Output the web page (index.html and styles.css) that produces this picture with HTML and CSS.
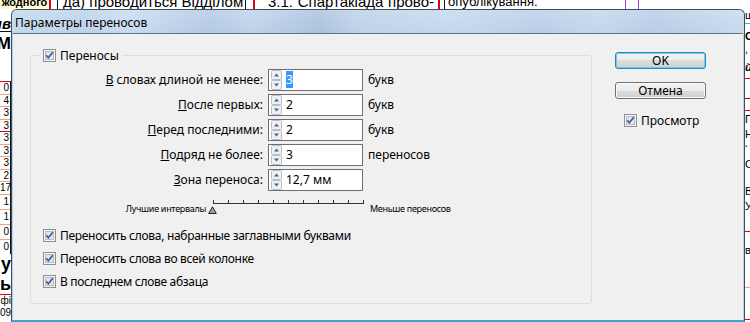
FILE: index.html
```html
<!doctype html>
<html>
<head>
    <title>Параметры переносов</title>
    <meta charset="utf-8">
    <link rel="stylesheet" href="styles.css">
</head>
<body>
    <!-- страница документа под окном -->
    <div class="page">
        <div class="top">
            <span class="yel">жодного</span>
            <span class="vr red"></span>
            <span class="vr blk v57"></span>
            <span class="txt c1">да) проводиться Відділом</span>
            <span class="vr blk v245"></span>
            <span class="vr red v253"></span>
            <span class="txt c2">3.1. Спартакіада прово-</span>
            <span class="vr red v437"></span>
            <span class="vr blk v443"></span>
            <span class="txt c3">опублікування.</span>
            <span class="vr violet v624"></span>
            <span class="vr violet v637"></span>
        </div>
        <div class="mid">
            <div class="lstrip">
                <b class="ls-a">ив</b>
                <span class="hr blk"></span>
                <b class="ls-m">М</b>
                <div class="ls-table">
                    <span class="red">0</span>
                    <span>4</span>
                    <span>3</span>
                    <span>3</span>
                    <span class="red">3</span>
                    <span>3</span>
                    <span>3</span>
                    <span>2</span>
                    <span>17</span>
                    <span class="tall">1</span>
                    <span class="tall">1</span>
                    <span class="tall">0</span>
                    <span class="tall">0</span>
                </div>
                <b class="ls-big">у</b>
                <b class="ls-big">ь</b>
                <span class="hr red"></span>
                <span class="ls-small">фі</span>
                <span class="ls-small">09</span>
            </div>
            <div class="rstrip">
                <span class="rs-sm">ш</span>
                <span class="hr cyan r23"></span>
                <b class="rs-b">С</b>
                <span class="rs-sm">,</span>
                <b class="rs-b"><i>й</i></b>
                <span class="hr red r75"></span>
                <span class="hr dred r95"></span>
                <span class="hr red r107"></span>
                <span class="rs-t">П</span>
                <span class="rs-t">Н</span>
                <span class="rs-t">‘</span>
                <span class="rs-t">О</span>
                <span class="rs-t r185">В</span>
                <span class="rs-t">У</span>
                <span class="hr red r227"></span>
                <span class="rs-t r244">в</span>
                <span class="hr salmon r288"></span>
                <span class="hr red r320"></span>
            </div>
        </div>
    </div>

    <!-- окно диалога -->
    <div class="dialog">
        <div class="titlebar">Параметры переносов</div>
        <div class="client">
            <fieldset class="group">
                <legend>
                    <svg class="cb" viewBox="0 0 13 13"><rect class="o" x=".5" y=".5" width="12" height="12"/><rect class="i" x="2.5" y="2.5" width="8" height="8"/><path d="M3.2 6.3 5.3 8.7 9.8 3.3"/></svg>
                    Переносы
                </legend>

                <div class="fields">
                    <label><u>В</u> словах длиной не менее:</label>
                    <span class="num">
                        <svg class="spin" viewBox="0 0 11 20"><rect x=".5" y=".5" width="10" height="9" rx="1"/><rect x=".5" y="10.5" width="10" height="9" rx="1"/><path d="M3 6.5h5L5.5 3.5z"/><path d="M3 13.5h5l-2.5 3z"/></svg>
                        <span><span class="sel">3</span></span>
                    </span>
                    <span>букв</span>

                    <label><u>П</u>осле первых:</label>
                    <span class="num">
                        <svg class="spin" viewBox="0 0 11 20"><rect x=".5" y=".5" width="10" height="9" rx="1"/><rect x=".5" y="10.5" width="10" height="9" rx="1"/><path d="M3 6.5h5L5.5 3.5z"/><path d="M3 13.5h5l-2.5 3z"/></svg>
                        <span>2</span>
                    </span>
                    <span>букв</span>

                    <label><u>П</u>еред последними:</label>
                    <span class="num">
                        <svg class="spin" viewBox="0 0 11 20"><rect x=".5" y=".5" width="10" height="9" rx="1"/><rect x=".5" y="10.5" width="10" height="9" rx="1"/><path d="M3 6.5h5L5.5 3.5z"/><path d="M3 13.5h5l-2.5 3z"/></svg>
                        <span>2</span>
                    </span>
                    <span>букв</span>

                    <label><u>П</u>одряд не более:</label>
                    <span class="num">
                        <svg class="spin" viewBox="0 0 11 20"><rect x=".5" y=".5" width="10" height="9" rx="1"/><rect x=".5" y="10.5" width="10" height="9" rx="1"/><path d="M3 6.5h5L5.5 3.5z"/><path d="M3 13.5h5l-2.5 3z"/></svg>
                        <span>3</span>
                    </span>
                    <span>переносов</span>

                    <label><u>З</u>она переноса:</label>
                    <span class="num">
                        <svg class="spin" viewBox="0 0 11 20"><rect x=".5" y=".5" width="10" height="9" rx="1"/><rect x=".5" y="10.5" width="10" height="9" rx="1"/><path d="M3 6.5h5L5.5 3.5z"/><path d="M3 13.5h5l-2.5 3z"/></svg>
                        <span>12,7 мм</span>
                    </span>
                    <span></span>
                </div>

                <!-- шкала -->
                <div class="scale">
                    <div class="best">
                        <span>Лучшие интервалы</span>
                        <svg class="thumb" viewBox="0 0 9 8"><path d="M4.5 .8 8.3 7.5H.7z"/></svg>
                    </div>
                    <div class="ruler"></div>
                    <div class="less">Меньше переносов</div>
                </div>

                <div class="checks">
                    <div class="check">
                        <svg class="cb" viewBox="0 0 13 13"><rect class="o" x=".5" y=".5" width="12" height="12"/><rect class="i" x="2.5" y="2.5" width="8" height="8"/><path d="M3.2 6.3 5.3 8.7 9.8 3.3"/></svg>
                        Переносить слова, набранные заглавными буквами
                    </div>
                    <div class="check">
                        <svg class="cb" viewBox="0 0 13 13"><rect class="o" x=".5" y=".5" width="12" height="12"/><rect class="i" x="2.5" y="2.5" width="8" height="8"/><path d="M3.2 6.3 5.3 8.7 9.8 3.3"/></svg>
                        Переносить слова во всей колонке
                    </div>
                    <div class="check">
                        <svg class="cb" viewBox="0 0 13 13"><rect class="o" x=".5" y=".5" width="12" height="12"/><rect class="i" x="2.5" y="2.5" width="8" height="8"/><path d="M3.2 6.3 5.3 8.7 9.8 3.3"/></svg>
                        В последнем слове абзаца
                    </div>
                </div>
            </fieldset>

            <div class="side">
                <button class="btn def">OK</button>
                <button class="btn">Отмена</button>
                <div class="check">
                    <svg class="cb" viewBox="0 0 13 13"><rect class="o" x=".5" y=".5" width="12" height="12"/><rect class="i" x="2.5" y="2.5" width="8" height="8"/><path d="M3.2 6.3 5.3 8.7 9.8 3.3"/></svg>
                    Просмотр
                </div>
            </div>
        </div>
    </div>
</body>
</html>
```

FILE: styles.css
```css
body {
    margin: 0;
    width: 750px;
    height: 322px;
    overflow: hidden;
    position: relative;
    background: #fff;
    font-family: 'Liberation Sans', Arial, sans-serif;
    color: #000;
}

/* ---- страница под окном ---- */
.page {
    display: flex;
    flex-direction: column;
    height: 322px;
}

.top {
    display: flex;
    flex: none;
    height: 9px;
    overflow: hidden;
    line-height: 4px;
    white-space: nowrap;
}

.yel {
    width: 49px;
    background: #fffbd2;
    font-size: 11px;
    font-weight: bold;
    text-align: center;
}

.vr {
    width: 1px;
    flex: none;
}
.vr.red { width: 2px; }

.red { background: #e3001b; }
.blk { background: #111; }
.violet { background: #9b3cf0; }
.cyan { background: #18c6da; }
.dred { background: #a0000f; }
.salmon { background: #f3a07e; }

.v57 { margin-left: 6px; }
.v245 { margin-left: 5px; }
.v253 { margin-left: 7px; }
.v437 { margin-left: 4px; }
.v443 { margin-left: 4px; }
.v624 { margin-left: 89px; }
.v637 { margin-left: 12px; }

.txt {
    font-size: 15px;
    text-align-last: justify;
    flex: none;
}
.c1 { width: 177px; margin-left: 5px; }
.c2 { width: 166px; margin-left: 13px; }
.c3 { width: 88px; margin-left: 3px; font-size: 13px; text-align-last: auto; }

.mid {
    display: flex;
    flex: 1;
    justify-content: space-between;
}

.hr {
    align-self: stretch;
    height: 1px;
    flex: none;
}

.lstrip {
    width: 11px;
    overflow: hidden;
    display: flex;
    flex-direction: column;
    align-items: flex-end;
    white-space: nowrap;
}

.ls-a {
    margin-top: 7px;
    font-size: 15px;
    font-style: italic;
    line-height: 15px;
}

.ls-m {
    margin-top: 3px;
    font-size: 17px;
    line-height: 18px;
}

.ls-table {
    align-self: stretch;
    margin-top: 28px;
    border-right: 1px solid #111;
    display: flex;
    flex-direction: column;
}

.ls-table span {
    height: 12.5px;
    box-sizing: border-box;
    border-top: 1px solid #f3a07e;
    font-size: 10px;
    line-height: 11px;
    text-align: right;
    padding-right: 1px;
    background: none;
}
.ls-table span.red { border-top-color: #e3001b; }
.ls-table span.tall { height: 15px; line-height: 14px; }

.ls-big {
    font-size: 18px;
    line-height: 20px;
}

.ls-small {
    font-size: 10px;
    line-height: 12px;
}

.rstrip {
    width: 5px;
    overflow: hidden;
    display: flex;
    flex-direction: column;
    align-items: flex-start;
    white-space: nowrap;
    font-size: 11px;
}

.rs-sm { line-height: 12px; }
.r23 { margin-top: 2px; }
.rs-b { line-height: 13px; margin-top: 6px; }
.r75 { margin-top: 4px; }
.r95 { margin-top: 19px; }
.r107 { margin-top: 11px; }
.rs-t { line-height: 13px; margin-top: 2px; }
.r185 { margin-top: 14px; }
.r227 { margin-top: 18px; }
.r244 { margin-top: 12px; }
.r288 { margin-top: 30px; }
.r320 { margin-top: 31px; }

/* ---- окно ---- */
.dialog {
    position: absolute;
    left: 11px;
    top: 9px;
    width: 732px;
    border: 1px solid #3f4d5c;
    border-bottom: 2px solid #3aa5cf;
    border-radius: 6px 6px 0 0;
    background: #b9cfe7;
    font-family: 'Noto Sans', 'Segoe UI', sans-serif;
    font-size: 12px;
    color: #000;
}

.titlebar {
    height: 23px;
    box-sizing: border-box;
    padding: 5px 0 0 3px;
    line-height: 16px;
    border-radius: 5px 5px 0 0;
    background:
        linear-gradient(rgba(255, 255, 255, 0.18), rgba(255, 255, 255, 0)),
        linear-gradient(90deg, #c3d7ec 0%, #bcd2ea 10%, #c8dbef 16%, #b2c9e3 27%, #bed3ea 33%, #a9c2de 42%, #bcd1e8 47%, #c4d8ed 60%, #b8cee7 72%, #c2d6ec 80%, #b6cde6 88%, #c7daee 100%);
}

.client {
    display: flex;
    align-items: flex-start;
    height: 287px;
    box-sizing: border-box;
    margin: 0 1px;
    padding: 14px 0 0 17px;
    border-top: 1px solid #62727f;
    background: #f0f0f0;
}

.group {
    width: 560px;
    margin: 0;
    padding: 0 0 10px;
    border: 1px solid #d5dfe5;
    border-radius: 3px;
}

.group legend {
    display: flex;
    align-items: center;
    gap: 4px;
    margin-left: 9px;
    padding: 0 3px;
    line-height: 15px;
}

.cb {
    width: 13px;
    height: 13px;
    flex: none;
}
.cb .o { fill: #f6f6f6; stroke: #8e8f8f; }
.cb .i { fill: #e1e5ea; stroke: #b4bbc4; }
.cb path { fill: none; stroke: #3d5a98; stroke-width: 1.7; }

.fields {
    display: grid;
    grid-template-columns: 232px 95px auto;
    grid-auto-rows: 22px;
    column-gap: 5px;
    row-gap: 3px;
    margin-top: 6px;
    line-height: 22px;
}

.fields label {
    text-align: right;
}

.num {
    display: flex;
    align-items: center;
    box-sizing: border-box;
    border: 1px solid #6f6f6f;
    background: #fff;
}

.spin {
    width: 11px;
    height: 20px;
    margin-left: 2px;
    flex: none;
}
.spin rect { fill: #eef0f3; stroke: #b7bfc9; }
.spin path { fill: #4f6480; }

.num > span {
    margin-left: 4px;
    line-height: 16px;
}

.sel {
    background: #3399ff;
    color: #fff;
}

.scale {
    display: grid;
    grid-template-columns: 182px 151px auto;
    height: 14px;
    margin-top: 9px;
    font-size: 9px;
    letter-spacing: -0.3px;
    color: #000;
}

.best {
    display: flex;
    justify-content: flex-end;
    align-items: flex-end;
    line-height: 10px;
}

.thumb {
    width: 9px;
    height: 8px;
    margin: 0 -4px 0 2px;
    flex: none;
}
.thumb path { fill: #a2a2a2; stroke: #222; }

.ruler {
    height: 3px;
    border-bottom: 1px solid #333;
    background: repeating-linear-gradient(90deg, #333 0 1px, transparent 1px 15px);
}

.less {
    padding: 4px 0 0 6px;
    line-height: 10px;
}

.checks {
    margin-top: 10px;
    letter-spacing: -0.3px;
}

.check {
    display: flex;
    align-items: center;
    gap: 4px;
    height: 23px;
    padding-left: 12px;
}

.side {
    display: flex;
    flex-direction: column;
    width: 91px;
    margin: 4px 0 0 23px;
}

.btn {
    height: 17px;
    padding: 0;
    border: 1px solid #707070;
    border-radius: 3px;
    font-family: inherit;
    font-size: 12px;
    line-height: 15px;
    color: #000;
    background: linear-gradient(#f2f2f2, #ebebeb 50%, #dddddd 50%, #cfcfcf);
    box-shadow: inset 0 0 0 1px #fbfbfb;
}

.btn.def {
    border-color: #3c7fb1;
    box-shadow: inset 0 0 0 1px #5fd2f7;
}

.btn + .btn {
    margin-top: 13px;
}

.side .check {
    height: 15px;
    margin-top: 14px;
    padding-left: 9px;
}
```
